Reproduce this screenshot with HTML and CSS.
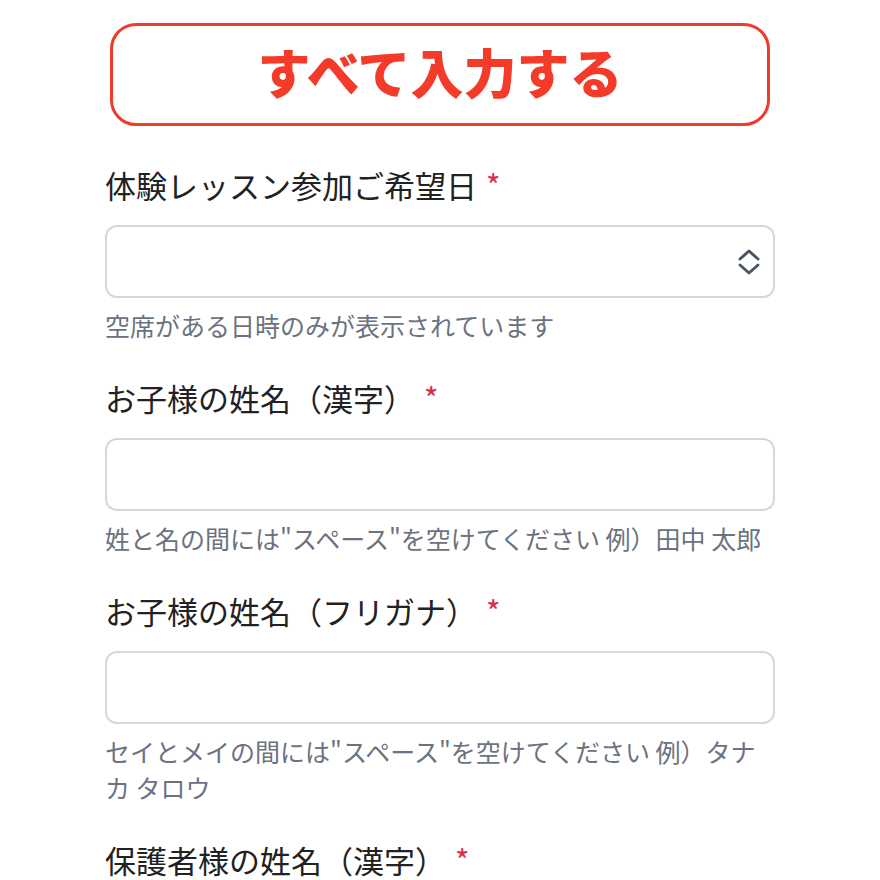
FILE: index.html
```html
<!DOCTYPE html>
<html lang="ja">
<head>
    <meta charset="UTF-8">
    <meta name="viewport" content="width=device-width, initial-scale=1.0">
    <title>体験レッスン申し込み</title>
    <link rel="stylesheet" href="styles.css">
</head>
<body>
    <div class="page">
        <button class="fill-all" type="button">すべて入力する</button>

        <form class="form">
            <div class="field">
                <label class="label" for="date">体験レッスン参加ご希望日 <span class="req">*</span></label>
                <div class="select-wrap">
                    <select class="input select" id="date">
                        <option value=""></option>
                    </select>
                    <svg class="chevron" width="24" height="28" viewBox="0 0 24 28" fill="none" stroke="#4b5563" stroke-width="3" stroke-linecap="round" stroke-linejoin="round">
                        <path d="M3 11 L12 3 L21 11"/>
                        <path d="M3 17 L12 25 L21 17"/>
                    </svg>
                </div>
                <p class="help">空席がある日時のみが表示されています</p>
            </div>

            <div class="field">
                <label class="label" for="kanji">お子様の姓名（漢字） <span class="req">*</span></label>
                <input class="input" type="text" id="kanji">
                <p class="help">姓と名の間には"スペース"を空けてください 例）田中 太郎</p>
            </div>

            <div class="field">
                <label class="label" for="kana">お子様の姓名（フリガナ） <span class="req">*</span></label>
                <input class="input" type="text" id="kana">
                <p class="help">セイとメイの間には"スペース"を空けてください 例）タナカ タロウ</p>
            </div>

            <div class="field">
                <label class="label" for="parent">保護者様の姓名（漢字） <span class="req">*</span></label>
                <input class="input" type="text" id="parent">
            </div>
        </form>
    </div>
</body>
</html>
```

FILE: styles.css
```css
body {
    margin: 0;
    background-color: #fff;
    font-family: "Noto Sans CJK JP", "Noto Sans", sans-serif;
    color: #222;
}
.page {
    width: 670px;
    margin-left: 105px;
    padding-top: 23px;
}
.fill-all {
    display: flex;
    align-items: center;
    justify-content: center;
    width: 660px;
    height: 103px;
    margin: 0 0 0 5px;
    padding: 0 0 8px;
    box-sizing: border-box;
    border: 3px solid #f03a2a;
    border-radius: 26px;
    background-color: #fff;
    color: #f43a28;
    font-family: "Noto Sans CJK JP", sans-serif;
    font-size: 53px;
    font-weight: 900;
    cursor: pointer;
}
.form {
    margin-top: 36px;
}
.field {
    margin-bottom: 32px;
}
.label {
    display: block;
    font-size: 31px;
    line-height: 46px;
    margin-bottom: 17px;
    color: #222;
}
.req {
    color: #d6304a;
    font-size: 31px;
    margin-left: 2px;
}
.input {
    display: block;
    width: 100%;
    height: 73px;
    box-sizing: border-box;
    border: 2px solid #d4d7dc;
    border-radius: 12px;
    background-color: #fff;
    font-size: 26px;
    padding: 0 16px;
    font-family: inherit;
}
.select-wrap {
    position: relative;
}
.select {
    appearance: none;
    -webkit-appearance: none;
}
.chevron {
    position: absolute;
    right: 14px;
    top: 23px;
    pointer-events: none;
}
.help {
    margin: 9px 0 0;
    font-size: 25px;
    line-height: 36px;
    color: #6b7280;
}
```
